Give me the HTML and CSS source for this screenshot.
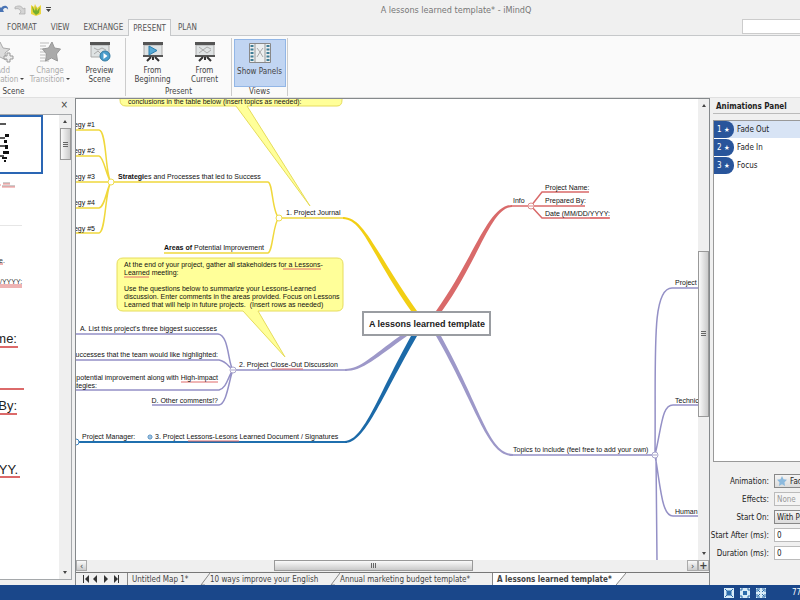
FILE: index.html
```html
<!DOCTYPE html>
<html lang="en">
<head>
    <meta charset="UTF-8">
    <meta name="viewport" content="width=device-width, initial-scale=1.0">
    <title>A lessons learned template* - iMindQ</title>
    <link rel="stylesheet" href="styles.css">
</head>
<body>
    <header class="titlebar">
        <div class="quick">
            <button class="icon-btn" aria-label="Undo"><svg width="10" height="12" viewBox="0 0 10 12"><path d="M0 8V3l1 1C4 0 9 2 8 6c0-2-4-3-5 0l1 2z" fill="#4a74b4"/></svg></button>
            <button class="icon-btn" aria-label="Redo"><svg width="12" height="12" viewBox="0 0 12 12"><path d="M1 3c4-2 7-1 8 2l2-1v6H5l2-2C6 5 4 4 1 5z" fill="#d4d4d4" stroke="#aaa" stroke-width=".7"/></svg></button>
            <button class="icon-btn" aria-label="Mind map"><svg width="12" height="12" viewBox="0 0 12 12"><path d="M1 1l3 2 1-3 2 4 4-3v9l-5 2-5-2z" fill="#ecd640"/><path d="M2 2l3 5 1-5 1 5 3-4-1 6-3 2-3-3z" fill="#75ae2d"/></svg></button>
            <button class="icon-btn" aria-label="Customize"><svg width="5" height="6" viewBox="0 0 5 6"><path d="M0 0h5v1H0zM0 2h5L2.500 5z" fill="#444"/></svg></button>
        </div>
        <h1 class="title">A lessons learned template* - iMindQ</h1>
    </header>
    <nav class="menu">
        <button class="menu-tab">FORMAT</button>
        <button class="menu-tab">VIEW</button>
        <button class="menu-tab">EXCHANGE</button>
        <button class="menu-tab current">PRESENT</button>
        <button class="menu-tab">PLAN</button>
        <input class="search" type="text" aria-label="Search">
    </nav>

    <section class="ribbon">
        <div class="group scene">
            <div class="tools">
                <button class="tool disabled">
                    <svg width="24" height="22" viewBox="0 0 24 22"><path d="M9 1l3 6 7 1-5 4 1 7-6-3-6 3 1-7-5-4 7-1z" fill="#dcdcdc" stroke="#aaa"/><path d="M16 12h3v3h3v3h-3v3h-3v-3h-3v-3h3z" fill="#eee" stroke="#999"/></svg>
                    <span>Add</span><span>Animation<i class="caret"></i></span>
                </button>
                <button class="tool disabled">
                    <svg width="22" height="22" viewBox="0 0 22 22"><path d="M1 2h9M1 5h6M1 8h4M1 11h5M1 14h6M1 17h5M1 20h9" stroke="#bbb"/><path d="M13 1l2.500 6 6 1-4 5 1 7-6-3-6 3 1-7-4-5 6-1z" fill="#aaa" stroke="#999"/></svg>
                    <span>Change</span><span>Transition<i class="caret"></i></span>
                </button>
                <button class="tool">
                    <svg width="22" height="22" viewBox="0 0 22 22"><path d="M2 4h18v12H2z" fill="#dfe3e4" stroke="#aaa"/><path d="M5 7l4 2 4-2 4 2M5 13l4-3 3 3" stroke="#aaa" fill="none"/><path d="M1 1h20v3H1z" fill="#555"/><circle cx="16" cy="15" r="5" fill="#4a9dcc" stroke="#32799f"/><path d="M14.500 12l4 3-4 3z" fill="#fff"/></svg>
                    <span>Preview</span><span>Scene</span>
                </button>
            </div>
            <span class="group-name">Scene</span>
        </div>
        <div class="group present">
            <div class="tools">
                <button class="tool">
                    <svg width="22" height="22" viewBox="0 0 22 22"><path d="M2 4h18v11H2z" fill="#dfe3e4" stroke="#aaa"/><path d="M1 1h20v3H1zM1 14h20v2H1z" fill="#555"/><path d="M9 16l-4 4M13 16l4 4M11 16v3" stroke="#333" stroke-width="2"/><path d="M7 5l8 4.500L7 14z" fill="#55a9d6" stroke="#2c7fae"/></svg>
                    <span>From</span><span>Beginning</span>
                </button>
                <button class="tool">
                    <svg width="22" height="22" viewBox="0 0 22 22"><path d="M2 4h18v11H2z" fill="#dfe3e4" stroke="#aaa"/><path d="M5 6l4 3 4-3 4 2M5 12l4-3 4 3 4-3" stroke="#aaa" fill="none"/><path d="M1 1h20v3H1zM1 14h20v2H1z" fill="#555"/><path d="M9 16l-4 4M13 16l4 4M11 16v3" stroke="#333" stroke-width="2"/></svg>
                    <span>From</span><span>Current</span>
                </button>
            </div>
            <span class="group-name">Present</span>
        </div>
        <div class="group views">
            <div class="tools">
                <button class="tool pressed">
                    <svg width="22" height="22" viewBox="0 0 22 22"><path d="M.5 1.500h21v19H.5z" fill="#eceff0" stroke="#888"/><path d="M3 3v16M19 3v16" stroke="#3f7c94" stroke-width="3" stroke-dasharray="2 1.500"/><path d="M6 2v18M16 2v18" stroke="#999"/><path d="M8 6l3 4 3-4M8 15l3-5 3 5" fill="none" stroke="#aaa"/></svg>
                    <span>Show Panels</span>
                </button>
            </div>
            <span class="group-name">Views</span>
        </div>
    </section>

    <main class="workspace">
        <aside class="slides">
            <div class="slides-head"><button class="close" aria-label="Close">×</button></div>
            <div class="slides-body">
                <div class="slide-list">
                    <button class="thumb" aria-label="Scene 1"><svg width="42" height="58" viewBox="0 0 42 58"><path d="M0 7h6M0 21h5M0 29h8M0 39h4" stroke="#222" stroke-width="1.500"/><path d="M5 17h4v3H5zM4 23h3v3H4zM5 28h3v4H5zM3 34h6v3H3zM2 40h5v2H2zM4 43h2v2H4z" fill="#111"/></svg></button>
                    <svg class="scene-two" width="58" height="50" viewBox="0 0 58 50"><path d="M3 7h7M2 10h13" stroke="#999"/><path d="M3 8h7M2 11h13M0 9h1" stroke="#e88"/><path d="M0 50h22" stroke="#ccc"/></svg>
                    <svg class="scene-three" width="58" height="262" viewBox="0 0 58 262">
                        <g class="small-scene"><text x="-1" y="37">e.</text><text x="0" y="58">/YYYY:</text></g>
                        <g class="big-scene"><text x="17" y="117">Project Name:</text><text x="17" y="184">Prepared By:</text><text x="18" y="248">YYYY.</text></g>
                        <path d="M0 38h3M0 59h22M0 61h22" stroke="#d66"/>
                        <path d="M0 121h18M0 163h24M0 188h17M0 251h20" stroke="#dc6a6a" stroke-width="2"/>
                    </svg>
                </div>
                <div class="vscroll">
                    <span class="arrow up"></span>
                    <div class="grip-v short"></div>
                    <span class="arrow down"></span>
                </div>
            </div>
        </aside>

        <section class="editor">
            <div class="canvas-area">
                <svg class="map" role="img" aria-label="Mind map">
                    <g transform="translate(-76 -99)">
                        <!-- callouts -->
                        <path class="callout" d="M120 90V100Q120 106 126 106H236L310 206L247 106H337Q342 106 342 100V90Z"/>
                        <path class="callout" d="M123 258H337Q343 258 343 264V305Q343 311 337 311H258L285 357L243 311H123Q117 311 117 305V264Q117 258 123 258Z"/>

                        <!-- strategies -->
                        <g class="line yellow">
                            <path d="M76 130H99C107 131 105 175 111 182M76 156H99C104 157 106 176 111 182M76 182H268M76 208H99C105 207 107 187 111 182M76 233H99C106 232 105 190 111 182"/>
                            <path d="M268 182C273 183 272 213 279 218M268 253H164M268 253C273 252 273 222 279 218H345"/>
                        </g>
                        <path class="fill-yellow" d="M343 217C364 217 374 250 417 311H411C372 256 363 219 343 219Z"/>

                        <!-- info -->
                        <g class="line red"><path d="M511 206H531L542 192H589M531 206H585M531 206L542 218H610"/></g>
                        <path class="fill-red" d="M512 205C488 205 474 258 436 311H442C479 260 491 207 512 207Z"/>

                        <!-- discussion -->
                        <g class="line purple">
                            <path d="M76 334H218C229 335 228 364 233 370M76 360H219C226 361 229 367 233 370H347M76 390H219C227 388 228 376 233 370M152 405H219C227 404 229 379 233 370"/>
                            <path d="M511 455H655M655 455C656 352 651 288 672 288H698M655 455C662 425 662 405 673 405H698M655 455C661 490 662 516 673 516H698M656 455L657 561"/>
                        </g>
                        <path class="fill-purple" d="M345 369C362 368 370 357 400 336H407C376 358 363 371 345 371Z"/>
                        <path class="fill-purple" d="M436 336H441C481 408 489 454 513 454V456C487 456 478 409 436 336Z"/>

                        <!-- signatures -->
                        <g class="line blue"><path d="M76 442H347"/></g>
                        <path class="fill-blue" d="M345 441C364 440 378 395 411 336H417C380 400 365 443 345 443Z"/>

                        <!-- fold markers -->
                        <g class="fold">
                            <circle cx="111" cy="182" r="3" stroke="#eedc50"/><circle cx="279" cy="218" r="3" stroke="#eedc50"/>
                            <circle cx="531" cy="206" r="3" stroke="#dd8a8a"/><path d="M529 206h4" stroke="#dd8a8a"/>
                            <circle cx="233" cy="370" r="3" stroke="#a9a6cc"/><path d="M231 370h4" stroke="#a9a6cc"/>
                            <circle cx="655" cy="455" r="3" stroke="#a9a6cc"/><path d="M653 455h4" stroke="#a9a6cc"/>
                            <circle cx="76" cy="442" r="3" stroke="#3f83bd"/>
                            <circle cx="150" cy="437" r="2" stroke="#3f83bd"/><path d="M149 437h2" stroke="#3f83bd"/>
                        </g>

                        <!-- spelling marks -->
                        <path class="spell" d="M283 269h38M124 277h25M181 382h37M272 369h31M188 441h51M590 218h19"/>

                        <g class="topics">
                            <text x="128" y="104">conclusions in the table below (insert topics as needed):</text>
                            <text x="95" y="127" class="end">Strategy #1</text>
                            <text x="95" y="153" class="end">Strategy #2</text>
                            <text x="95" y="179" class="end">Strategy #3</text>
                            <text x="95" y="205" class="end">Strategy #4</text>
                            <text x="95" y="231" class="end">Strategy #5</text>
                            <text x="118" y="179"><tspan class="strong">Strategi</tspan>es and Processes that led to Success</text>
                            <text x="286" y="215">1. Project Journal</text>
                            <text x="164" y="250"><tspan class="strong">Areas of</tspan> Potential Improvement</text>
                            <text x="124" y="267">At the end of your project, gather all stakeholders for a Lessons-</text>
                            <text x="124" y="275">Learned meeting:</text>
                            <text x="124" y="291">Use the questions below to summarize your Lessons-Learned</text>
                            <text x="124" y="299">discussion. Enter comments in the areas provided. Focus on Lessons</text>
                            <text x="124" y="307">Learned that will help in future projects.  (Insert rows as needed)</text>
                            <text x="217" y="331" class="end">A. List this project's three biggest successes</text>
                            <text x="218" y="357" class="end">B. Successes that the team would like highlighted:</text>
                            <text x="218" y="380" class="end">C. Areas of potential improvement along with High-impact</text>
                            <text x="97" y="388" class="end">strategies:</text>
                            <text x="218" y="403" class="end">D. Other comments!?</text>
                            <text x="239" y="367">2. Project Close-Out Discussion</text>
                            <text x="82" y="439">Project Manager:</text>
                            <text x="155" y="439">3. Project Lessons-Lesons Learned Document / Signatures</text>
                            <text x="513" y="203">Info</text>
                            <text x="545" y="190">Project Name:</text>
                            <text x="545" y="203">Prepared By:</text>
                            <text x="545" y="216">Date (MM/DD/YYYY:</text>
                            <text x="513" y="452">Topics to include (feel free to add your own)</text>
                            <text x="675" y="285">Project</text>
                            <text x="675" y="403">Technical</text>
                            <text x="675" y="514">Human</text>
                        </g>
                        <rect class="root" x="363" y="312" width="127" height="23"/>
                        <text class="root-name" x="427" y="327">A lessons learned template</text>
                    </g>
                </svg>
                <div class="vscroll map-v">
                    <span class="arrow up"></span>
                    <div class="grip-v long"></div>
                    <span class="arrow down"></span>
                </div>
                <div class="hscroll">
                    <button class="step" aria-label="Scroll left">‹</button>
                    <div class="grip-h"></div>
                    <button class="step" aria-label="Scroll right">›</button>
                </div>
                <button class="step plus" aria-label="Add">+</button>
            </div>
            <nav class="sheets">
                <svg class="pager" width="38" height="8" viewBox="0 0 38 8"><path d="M1 0h1v8H1zM7 0v8L3 4zM15 0v8l-4-4zM22 0v8l4-4zM32 0v8l4-4zM36 0h1v8h-1z" fill="#333"/></svg>
                <button class="sheet first">Untitled Map 1*</button>
                <svg class="slant" viewBox="0 0 10 12"><path d="M1 12L10 0M1 12h4" /></svg>
                <button class="sheet second">10 ways improve your English</button>
                <svg class="slant" viewBox="0 0 10 12"><path d="M1 12L10 0M1 12h4" /></svg>
                <button class="sheet third">Annual marketing budget template*</button>
                <button class="sheet active">A lessons learned template*</button>
                <svg class="slant" viewBox="0 0 10 12"><path d="M0 0h10L0 12z" fill="#fff" stroke="none"/><path d="M0 12L10 0" /></svg>
            </nav>
        </section>

        <aside class="animations">
            <h2 class="panel-title">Animations Panel</h2>
            <ol class="anim-list">
                <li class="anim selected"><span class="badge">1 <b>★</b></span>Fade Out</li>
                <li class="anim"><span class="badge">2 <b>★</b></span>Fade In</li>
                <li class="anim"><span class="badge">3 <b>★</b></span>Focus</li>
            </ol>
            <form class="settings">
                <label for="animation">Animation:</label>
                <div class="star-field">
                    <select id="animation"><option>Fade Out</option></select>
                    <svg class="star" width="10" height="10" viewBox="0 0 10 10"><path d="M5 0l1.500 3.300 3.500.5-2.500 2.500.5 3.700-3-1.700L2 10l.5-3.700L0 3.800l3.500-.5z" fill="#8cb9dd"/></svg>
                </div>
                <label for="effects">Effects:</label>
                <select id="effects" disabled><option>None</option></select>
                <label for="start">Start On:</label>
                <select id="start"><option>With Previous</option></select>
                <label for="after">Start After (ms):</label>
                <input id="after" type="text" value="0">
                <label for="duration">Duration (ms):</label>
                <input id="duration" type="text" value="0">
            </form>
        </aside>
    </main>

    <footer class="statusbar">
        <button class="icon-btn" aria-label="Fit map"><svg width="10" height="10" viewBox="0 0 10 10"><path d="M0 0h10v10H0z" fill="#d8ecf8"/><path d="M3 3h4v4H3zM1 1l2 2M9 1L7 3M1 9l2-2M9 9L7 7" fill="#2c6cab" stroke="#2c6cab"/></svg></button>
        <button class="icon-btn" aria-label="Center map"><svg width="10" height="10" viewBox="0 0 10 10"><path d="M0 0h10v10H0z" fill="#d8ecf8"/><path d="M3 3h4v4H3z" fill="#2c6cab"/><path d="M1 3V1h2M7 1h2v2M9 7v2H7M3 9H1V7" fill="none" stroke="#2c6cab"/></svg></button>
        <button class="icon-btn" aria-label="Full screen"><svg width="10" height="10" viewBox="0 0 10 10"><path d="M0 0h10v10H0z" fill="#d8ecf8"/><path d="M1 4V1h3M6 1h3v3M9 6v3H6M4 9H1V6M2 2l2 2M8 2L6 4M2 8l2-2M8 8L6 6" fill="none" stroke="#2c6cab"/></svg></button>
        <span class="zoom">77%</span>
    </footer>
</body>
</html>
```

FILE: styles.css
```css
* {
    box-sizing: border-box;
}
body {
    margin: 0;
    height: 100vh;
    display: flex;
    flex-direction: column;
    overflow: hidden;
    background-color: #f0f0f0;
    font-family: "DejaVu Sans Condensed", "Open Sans", sans-serif;
    font-size: 8px;
    line-height: 9px;
    color: #444;
}
button, input, select {
    margin: 0;
    padding: 0;
    border: none;
    border-radius: 0;
    background: none;
    font: inherit;
    color: inherit;
}
svg {
    display: block;
    flex: none;
}
.titlebar {
    display: grid;
    grid-template-columns: 1fr auto 1fr;
    align-items: center;
    height: 19px;
}
.quick {
    display: flex;
    align-items: center;
    gap: 4px;
}
.icon-btn {
    display: block;
}
.title {
    margin: 0 0 0 112px;
    font-size: 9px;
    font-weight: normal;
    line-height: 12px;
    color: #777;
}
.menu {
    display: flex;
    align-items: stretch;
    height: 17px;
    border-bottom: 1px solid #c6c8ca;
}
.menu-tab {
    padding: 0 7px;
    color: #555;
}
.current {
    height: 17px;
    margin-left: -2px;
    background-color: #fafafa;
    border: 1px solid #c6c8ca;
    border-bottom: none;
    padding: 0 4px;
}
.search {
    width: 58px;
    margin-left: auto;
    height: 15px;
    background-color: #fff;
    border: 1px solid #ccc;
    border-right: none;
}

/* ribbon */
.ribbon {
    display: flex;
    height: 62px;
    background-color: #fafafa;
    border-bottom: 1px solid #e0e0e0;
    padding-top: 2px;
}
.group {
    display: flex;
    flex-direction: column;
    align-items: center;
    border-right: 1px solid #ccc;
    height: 58px;
}
.tools {
    display: flex;
    justify-content: center;
    height: 49px;
}
.scene {
    width: 126px;
    overflow: hidden;
}
.scene .tools {
    width: 126px;
    justify-content: flex-end;
}
.scene .group-name {
    margin-right: 98px;
}
.present {
    width: 106px;
}
.views {
    width: 56px;
}
.tool {
    display: flex;
    flex-direction: column;
    align-items: center;
    flex: none;
    width: 52px;
    padding-top: 3px;
    white-space: nowrap;
}
.tool svg {
    margin-bottom: 3px;
}
.disabled {
    width: 47px;
    color: #aaa;
}
.caret {
    display: inline-block;
    margin-left: 2px;
    vertical-align: 2px;
    border: 2px solid transparent;
    border-top-color: #444;
    border-bottom: none;
}
.pressed {
    height: 48px;
    margin-top: 1px;
    padding-top: 2px;
    background-color: #c1d5f2;
    border: 1px solid #92b6e6;
}

/* scene list */
.workspace {
    flex: 1;
    min-height: 0;
    display: flex;
}
.slides {
    width: 72px;
    margin-right: 3px;
    display: flex;
    flex-direction: column;
}
.slides-head {
    height: 16px;
    text-align: right;
}
.close {
    margin-right: 4px;
    font-size: 10px;
    line-height: 14px;
}
.slides-body {
    flex: 1;
    min-height: 0;
    display: flex;
    margin-bottom: 5px;
    background-color: #fff;
    border: 1px solid #a5a8ab;
    border-left: none;
}
.slide-list {
    flex: 1;
    overflow: hidden;
}
.thumb {
    display: block;
    width: 43px;
    height: 59px;
    overflow: hidden;
    border: 2px solid #2a66b4;
    border-left: none;
}
.scene-two {
    margin-top: 2px;
}
.small-scene {
    font: 7px "Liberation Sans", sans-serif;
    fill: #333;
}
.big-scene {
    font: 13px "Liberation Sans", sans-serif;
    fill: #222;
    text-anchor: end;
}
.vscroll {
    display: flex;
    flex-direction: column;
    align-items: center;
    width: 12px;
    background-color: #efefef;
}
.arrow {
    margin: 5px 0;
    border: 2px solid transparent;
}
.up {
    border-bottom: 3px solid #444;
    border-top: none;
}
.down {
    margin-top: auto;
    border-top: 3px solid #444;
    border-bottom: none;
}
.grip-v {
    display: grid;
    place-items: center;
    width: 11px;
    border: 1px solid #999;
    background: linear-gradient(to right, #fafafa, #cacaca);
}
.grip-v::after {
    content: "";
    width: 5px;
    height: 5px;
    background: repeating-linear-gradient(#666 0 1px, transparent 1px 2px);
}
.short {
    height: 32px;
}
.long {
    height: 36%;
    margin-top: 139px;
}

/* map */
.editor {
    flex: 1;
    min-width: 0;
    display: flex;
    flex-direction: column;
    border-left: 1px solid #85898c;
    border-right: 1px solid #85898c;
    border-top: 1px solid #85898c;
}
.canvas-area {
    flex: 1;
    min-height: 0;
    display: grid;
    grid-template-columns: 1fr 11px;
    grid-template-rows: 1fr 12px;
    border-bottom: 1px solid #777;
}
.map {
    width: 100%;
    height: 100%;
    min-height: 0;
    overflow: hidden;
    background-color: #fff;
}
.map-v {
    width: 11px;
}
.hscroll {
    display: flex;
    background-color: #efefef;
}
.step {
    width: 11px;
    height: 11px;
    background: linear-gradient(#fafafa, #ccc);
    border: 1px solid #aaa;
    font-size: 9px;
    line-height: 8px;
}
.plus {
    font-size: 11px;
    font-weight: bold;
}
.grip-h {
    display: grid;
    place-items: center;
    width: 32%;
    height: 11px;
    margin-left: 30%;
    margin-right: auto;
    border: 1px solid #999;
    background: linear-gradient(#fafafa, #cacaca);
}
.grip-h::after {
    content: "";
    width: 5px;
    height: 5px;
    background: repeating-linear-gradient(to right, #666 0 1px, transparent 1px 2px);
}
.callout {
    fill: #ffff99;
    stroke: #e6dc5c;
}
.line {
    fill: none;
    stroke-width: 1.5;
}
.yellow {
    stroke: #f0d83c;
}
.red {
    stroke: #d96a6a;
}
.purple {
    stroke: #9490c6;
}
.blue {
    stroke: #1f6fae;
    stroke-width: 2;
}
.fill-yellow {
    fill: #f2cf14;
}
.fill-red {
    fill: #d96a6a;
}
.fill-purple {
    fill: #9d98c9;
}
.fill-blue {
    fill: #1c6aa8;
}
.fold {
    fill: #fff;
}
.spell {
    stroke: #e06a6a;
}
.topics {
    font: 7px "Liberation Sans", sans-serif;
    fill: #111;
}
.topics text {
    white-space: pre;
}
.end {
    text-anchor: end;
}
.strong {
    font-weight: bold;
}
.root {
    fill: #fff;
    stroke: #9a9da2;
    stroke-width: 2;
}
.root-name {
    font: bold 9px "Liberation Sans", sans-serif;
    fill: #222;
    text-anchor: middle;
}

/* sheet tabs */
.sheets {
    display: flex;
    align-items: stretch;
    height: 12px;
    white-space: nowrap;
    overflow: hidden;
}
.pager {
    margin: 2px 7px 0 6px;
}
.sheet {
    padding: 0 4px;
    text-align: left;
}
.first {
    width: 73px;
    border-left: 1px solid #888;
}
.second {
    width: 120px;
    padding: 0;
}
.third {
    width: 153px;
    padding: 0;
    border-right: 1px solid #888;
}
.active {
    background-color: #fff;
    font-weight: bold;
}
.slant {
    width: 10px;
    height: 12px;
    fill: none;
    stroke: #888;
}

/* animations */
.animations {
    width: 90px;
    padding-left: 3px;
    display: flex;
    flex-direction: column;
    overflow: hidden;
}
.panel-title {
    margin: 0;
    padding: 4px 0 1px 3px;
    border-bottom: 1px solid #bbb;
    font-size: 8px;
    line-height: 10px;
    white-space: nowrap;
    color: #222;
}
.anim-list {
    flex: 1;
    margin: 6px 0 0;
    padding: 0;
    list-style: none;
    background-color: #fff;
    border: 1px solid #999;
    border-right: none;
}
.anim {
    display: flex;
    align-items: center;
    gap: 3px;
    height: 17px;
    margin-bottom: 1px;
    color: #222;
}
.selected {
    background-color: #d8e4f5;
}
.badge {
    width: 20px;
    height: 17px;
    padding-left: 3px;
    border-radius: 0 8px 8px 0;
    background-color: #29559b;
    color: #fff;
    line-height: 17px;
    white-space: nowrap;
}
.badge b {
    font-size: 7px;
}
.settings {
    display: grid;
    grid-template-columns: 56px 80px;
    column-gap: 5px;
    row-gap: 4px;
    padding: 12px 0 25px;
    align-items: center;
    text-align: right;
    white-space: nowrap;
    color: #222;
}
.settings label {
    justify-self: end;
}
.settings select, .settings input {
    width: 80px;
    height: 14px;
    padding-left: 2px;
    background-color: #fff;
    border: 1px solid #bbb;
    appearance: none;
}
.settings select {
    background: linear-gradient(#f4f4f4, #dcdcdc);
    border-color: #888;
}
.settings select:disabled {
    background: #f4f4f4;
    border-color: #bbb;
    color: #999;
    opacity: 1;
}
.star-field {
    display: grid;
    align-items: center;
}
.star-field select {
    grid-area: 1 / 1;
    padding-left: 15px;
}
.star {
    grid-area: 1 / 1;
    margin-left: 3px;
    pointer-events: none;
}

.statusbar {
    display: flex;
    align-items: center;
    justify-content: flex-end;
    gap: 6px;
    height: 15px;
    overflow: hidden;
    background-color: #1a478a;
    color: #fff;
}
.statusbar .icon-btn {
    flex: none;
}
.zoom {
    flex: none;
    width: 8px;
    margin-left: 20px;
}
```
